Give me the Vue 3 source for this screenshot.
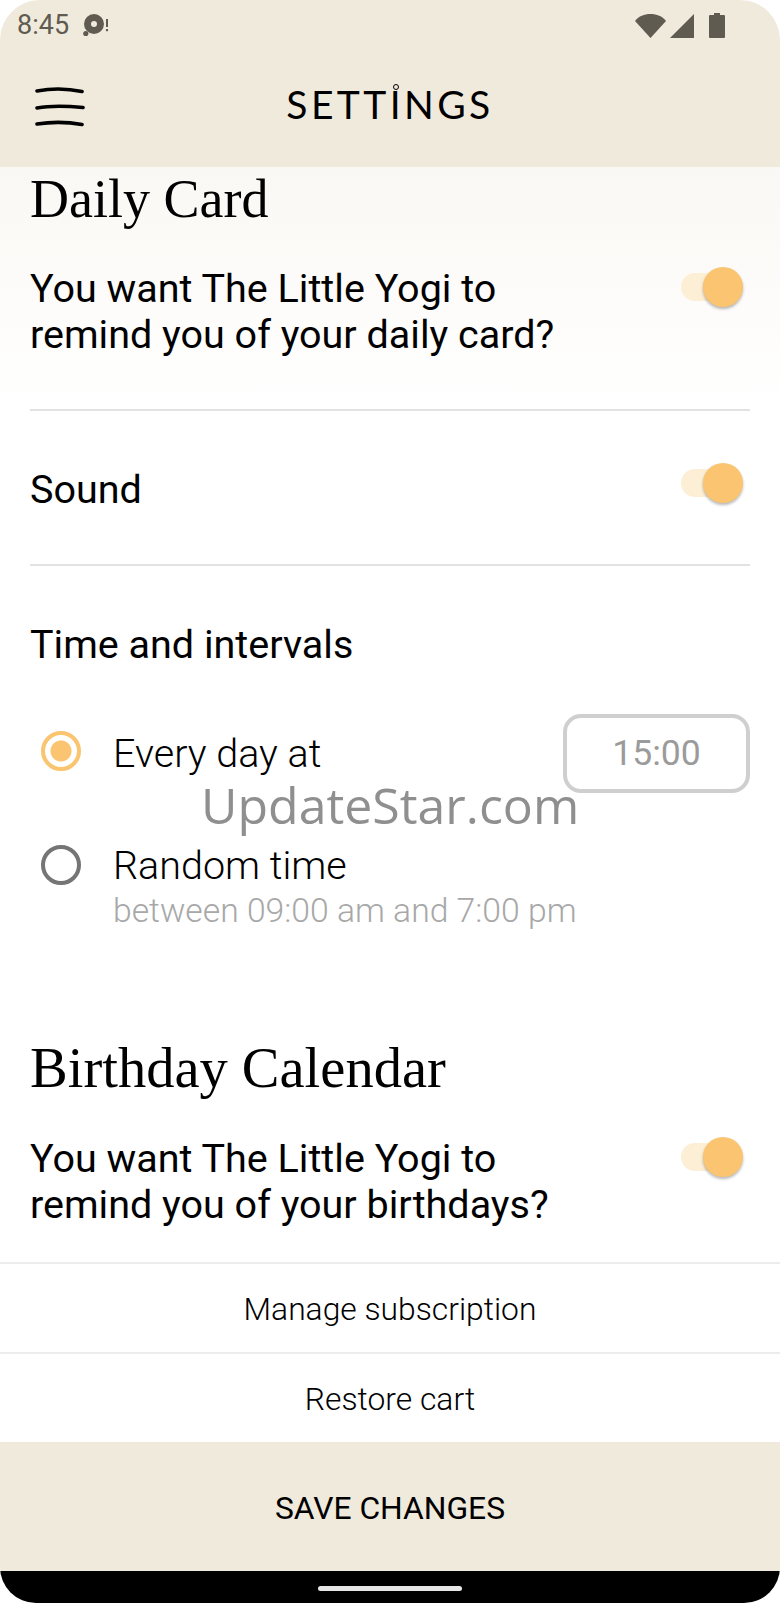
<template>
  <div class="screen">
    <header class="top">
      <div class="status">
        <div class="status-left">
          <span class="clock">8:45</span>
          <svg class="notif" width="30" height="26" viewBox="0 0 30 26">
            <path fill-rule="evenodd" fill="#5f5b50" d="M11 3a10 10 0 1 1 0 20 10 10 0 0 1 0-20zm0 7a3 3 0 1 0 0 6 3 3 0 0 0 0-6z" />
            <circle cx="2.8" cy="22.5" r="2.6" fill="#5f5b50" />
            <rect x="23" y="8" width="2" height="8" fill="#5f5b50" />
            <rect x="23" y="18" width="2" height="2.2" fill="#5f5b50" />
          </svg>
        </div>
        <div class="status-right">
          <svg width="31" height="26" viewBox="0 0 31 26">
            <path fill="#5f5b50" d="M0 9C4 4 9 2 15.500 2S27 4 31 9L15.500 26z" />
          </svg>
          <svg width="26" height="26" viewBox="0 0 26 26">
            <path fill="#5f5b50" d="M25 2v24H1z" />
          </svg>
          <svg width="16" height="26" viewBox="0 0 16 26">
            <path fill="#5f5b50" d="M5 1h6v2h4a1 1 0 0 1 1 1v21a1 1 0 0 1-1 1H1a1 1 0 0 1-1-1V4a1 1 0 0 1 1-1h4z" />
          </svg>
        </div>
      </div>
      <div class="toolbar">
        <svg class="menu" width="50" height="40" viewBox="0 0 50 40" fill="none" stroke="#000" stroke-width="3.6" stroke-linecap="round">
          <path d="M2 4C15 1.500 33 1.500 47 4.500" />
          <path d="M2 21C15 18.500 33 19 48 20.500" />
          <path d="M2 37C15 35 33 35 47 37.500" />
        </svg>
        <h1 class="title">SETT<span class="dotted">I</span>NGS</h1>
      </div>
    </header>

    <main class="content">
      <section class="daily">
        <h2>Daily Card</h2>
        <div class="row question">
          <p>You want The Little Yogi to<br>remind you of your daily card?</p>
          <span class="toggle"></span>
        </div>
      </section>

      <div class="row sound">
        <p>Sound</p>
        <span class="toggle"></span>
      </div>

      <section class="times">
        <p class="times-title">Time and intervals</p>
        <div class="option first">
          <span class="radio on"></span>
          <span class="option-label">Every day at</span>
          <span class="time-box">15:00</span>
        </div>
        <div class="option second">
          <span class="radio"></span>
          <div>
            <div class="option-label">Random time</div>
            <div class="option-hint">between 09:00 am and 7:00 pm</div>
          </div>
        </div>
      </section>

      <section class="birthday">
        <h2>Birthday Calendar</h2>
        <div class="row question">
          <p>You want The Little Yogi to<br>remind you of your birthdays?</p>
          <span class="toggle"></span>
        </div>
      </section>

      <div class="link-row">Manage subscription</div>
      <div class="link-row">Restore cart</div>
    </main>

    <div class="save">SAVE CHANGES</div>
    <div class="nav"><span class="pill"></span></div>

    <div class="watermark">UpdateStar.com</div>
  </div>
</template>

<script setup>
</script>

<style>
html,
body {
  margin: 0;
  background: #fff;
}
</style>

<style scoped>
.screen {
  position: relative;
  width: 780px;
  height: 1603px;
  overflow: hidden;
  display: flex;
  flex-direction: column;
  border-radius: 40px 40px 36px 36px;
  font-family: Roboto, sans-serif;
  color: #000;
  background: #fff;
}

.top {
  height: 167px;
  flex: none;
  background: #f0eadc;
}

.status {
  height: 48px;
  padding: 0 55px 0 17px;
  display: flex;
  justify-content: space-between;
  align-items: center;
}

.status-left {
  display: flex;
  align-items: center;
  gap: 14px;
}

.clock {
  font-size: 27px;
  color: #5f5b50;
  padding-top: 2px;
}

.status-right {
  display: flex;
  align-items: flex-start;
  gap: 3px;
  padding-top: 1px;
}

.status-right svg:last-child {
  margin-left: 11px;
}

.toolbar {
  position: relative;
  height: 119px;
  display: flex;
  align-items: center;
  justify-content: center;
}

.menu {
  position: absolute;
  left: 35px;
  top: 39px;
}

.title {
  margin: -8px 0 0;
  font-family: Lato, sans-serif;
  font-size: 39px;
  font-weight: 400;
  letter-spacing: 3.4px;
  line-height: 48px;
}

.dotted {
  position: relative;
}

.dotted::before {
  content: "";
  position: absolute;
  left: 3px;
  top: 3px;
  width: 4px;
  height: 4px;
  border: 1.5px solid #000;
  border-radius: 50%;
}

.content {
  flex: 1;
  background: linear-gradient(#faf8f4, #fff 240px);
}

h2 {
  margin: 0;
  font-family: "Liberation Serif", serif;
  font-weight: 400;
  font-size: 54px;
  line-height: 62px;
}

p {
  margin: 0;
}

.daily {
  margin: 0 30px;
  padding-top: 1px;
  height: 241px;
  border-bottom: 2px solid #e2e2e2;
}

.row {
  display: flex;
  justify-content: space-between;
  font-size: 39.500px;
  line-height: 46px;
}

.question {
  margin-top: 37px;
}

.daily .question {
  margin-top: 36px;
}

.toggle {
  position: relative;
  flex: none;
  width: 60px;
  height: 28px;
  margin: 7px 9px 0 0;
  border-radius: 14px;
  background: #fdeed6;
}

.toggle::after {
  content: "";
  position: absolute;
  right: -2px;
  top: -6px;
  width: 40px;
  height: 40px;
  border-radius: 50%;
  background: #fac470;
  box-shadow: 0 2px 3px rgba(0, 0, 0, 0.28);
}

.sound {
  margin: 0 30px;
  height: 153px;
  align-items: center;
  border-bottom: 2px solid #e2e2e2;
}

.sound p {
  margin-top: 4px;
}

.sound .toggle {
  margin: 0 9px 10px 0;
}

.times {
  margin: 0 30px;
  height: 484px;
}

.times-title {
  padding-top: 56px;
  font-size: 39.500px;
  line-height: 46px;
}

.option {
  display: flex;
  align-items: center;
  padding-left: 11px;
  font-weight: 300;
}

.option.first {
  margin-top: 46px;
}

.option.first .radio {
  margin-top: -5px;
}

.option.second {
  margin-top: 50px;
  align-items: flex-start;
}

.radio {
  flex: none;
  box-sizing: border-box;
  width: 40px;
  height: 40px;
  margin-right: 32px;
  border: 4px solid #757575;
  border-radius: 50%;
}

.second .radio {
  margin-top: 2px;
}

.radio.on {
  border-color: #fac470;
  background: radial-gradient(circle, #fac470 0 10px, transparent 11px);
}

.option-label {
  font-size: 39.500px;
  line-height: 46px;
}

.option-hint {
  font-size: 33.700px;
  line-height: 43px;
  color: #a8a8a8;
}

.time-box {
  box-sizing: border-box;
  width: 187px;
  height: 79px;
  margin-left: auto;
  border: 4px solid #cfcfcf;
  border-radius: 18px;
  text-align: center;
  line-height: 71px;
  font-size: 35.600px;
  font-weight: 400;
  color: #9b9b9b;
}

.birthday {
  margin: 0 30px;
  height: 225px;
}

.birthday h2 {
  margin-top: -13px;
  font-size: 56.500px;
}

.link-row {
  height: 88px;
  line-height: 90px;
  text-align: center;
  border-top: 2px solid #ececec;
  font-size: 31.800px;
  font-weight: 300;
}

.save {
  flex: none;
  height: 129px;
  line-height: 132px;
  text-align: center;
  background: #f0eadc;
  font-size: 31.800px;
}

.nav {
  flex: none;
  height: 32px;
  background: #000;
  display: flex;
  justify-content: center;
  align-items: flex-end;
}

.pill {
  width: 144px;
  height: 5px;
  margin-bottom: 12px;
  border-radius: 3px;
  background: #e6e6e6;
}

.watermark {
  position: absolute;
  left: 201px;
  top: 771px;
  font-family: "Open Sans", sans-serif;
  font-size: 50px;
  line-height: 68px;
  color: #8f8f8f;
}
</style>
